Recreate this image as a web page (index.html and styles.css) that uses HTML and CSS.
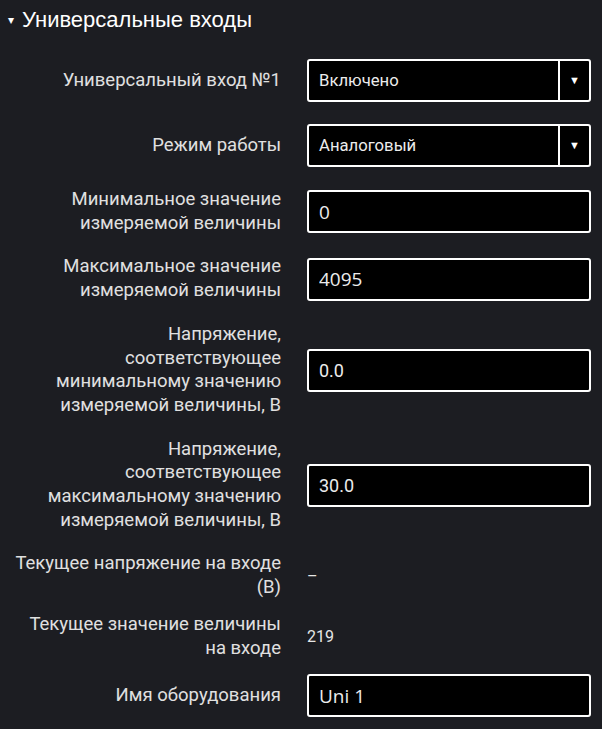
FILE: index.html
```html
<!DOCTYPE html>
<html lang="ru">
<head>
  <meta charset="UTF-8">
  <meta name="viewport" content="width=device-width, initial-scale=1.0">
  <title>Универсальные входы</title>
  <link rel="stylesheet" href="styles.css">
</head>
<body>
  <div class="section">
    <h2 class="section-title"><span class="caret">&#9662;</span>Универсальные входы</h2>

    <!-- Settings -->
    <div class="row">
      <div class="label">Универсальный вход №1</div>
      <div class="field">
        <div class="select">
          <span class="select-value">Включено</span>
          <span class="select-arrow">&#9660;</span>
        </div>
      </div>
    </div>

    <div class="row">
      <div class="label">Режим работы</div>
      <div class="field">
        <div class="select">
          <span class="select-value">Аналоговый</span>
          <span class="select-arrow">&#9660;</span>
        </div>
      </div>
    </div>

    <div class="row">
      <div class="label">Минимальное значение<br>измеряемой величины</div>
      <div class="field">
        <input class="input input-num" type="text" value="0">
      </div>
    </div>

    <div class="row">
      <div class="label">Максимальное значение<br>измеряемой величины</div>
      <div class="field">
        <input class="input input-num" type="text" value="4095">
      </div>
    </div>

    <div class="row">
      <div class="label">Напряжение,<br>соответствующее<br>минимальному значению<br>измеряемой величины, В</div>
      <div class="field">
        <input class="input" type="text" value="0.0">
      </div>
    </div>

    <div class="row">
      <div class="label">Напряжение,<br>соответствующее<br>максимальному значению<br>измеряемой величины, В</div>
      <div class="field">
        <input class="input" type="text" value="30.0">
      </div>
    </div>

    <!-- Readings -->
    <div class="row row-info">
      <div class="label">Текущее напряжение на входе<br>(В)</div>
      <div class="field value">–</div>
    </div>

    <div class="row row-info">
      <div class="label">Текущее значение величины<br>на входе</div>
      <div class="field value">219</div>
    </div>

    <div class="row">
      <div class="label">Имя оборудования</div>
      <div class="field">
        <input class="input input-num" type="text" value="Uni 1">
      </div>
    </div>
  </div>
</body>
</html>
```

FILE: styles.css
```css
/* General Styling */
body {
  margin: 0;
  padding: 0;
  background-color: #1c1d22;
  color: #e6e6e6;
  font-family: 'Roboto', 'Liberation Sans', sans-serif;
}
.section {
  padding: 7px 11px 0 0;
}
.section-title {
  display: flex;
  align-items: center;
  margin: 0 0 25px 0;
  padding-left: 8px;
  font-family: 'Liberation Sans', Arial, sans-serif;
  font-size: 22px;
  font-weight: normal;
  line-height: 26px;
  color: #ffffff;
}
.caret {
  font-size: 12px;
  width: 14px;
}
/* Rows */
.row {
  display: flex;
  align-items: center;
  margin-bottom: 20px;
}
.row-info {
  margin-bottom: 13px;
}
.label {
  width: 281px;
  flex-shrink: 0;
  text-align: right;
  font-size: 18.5px;
  line-height: 23.7px;
  color: #e0e0e0;
}
.field {
  margin-left: 26px;
  width: 284px;
}
.value {
  font-size: 16px;
  color: #e6e6e6;
}
/* Controls */
.input,
.select {
  display: block;
  box-sizing: border-box;
  width: 100%;
  height: 43px;
  margin: 1px 0;
  background-color: #000000;
  border: 2px solid #ffffff;
  border-radius: 3px;
  color: #ececec;
}
.input {
  padding: 0 10px;
  font-family: 'Roboto', sans-serif;
  font-size: 18px;
  outline: none;
}
.input-num {
  font-family: 'Open Sans', sans-serif;
  font-size: 19px;
}
.select {
  display: flex;
  align-items: center;
}
.select-value {
  flex: 1;
  padding-left: 10px;
  font-size: 16.7px;
}
.select-arrow {
  width: 29px;
  height: 100%;
  border-left: 2px solid #ffffff;
  display: flex;
  align-items: center;
  justify-content: center;
  font-size: 11px;
  color: #ffffff;
}
```
